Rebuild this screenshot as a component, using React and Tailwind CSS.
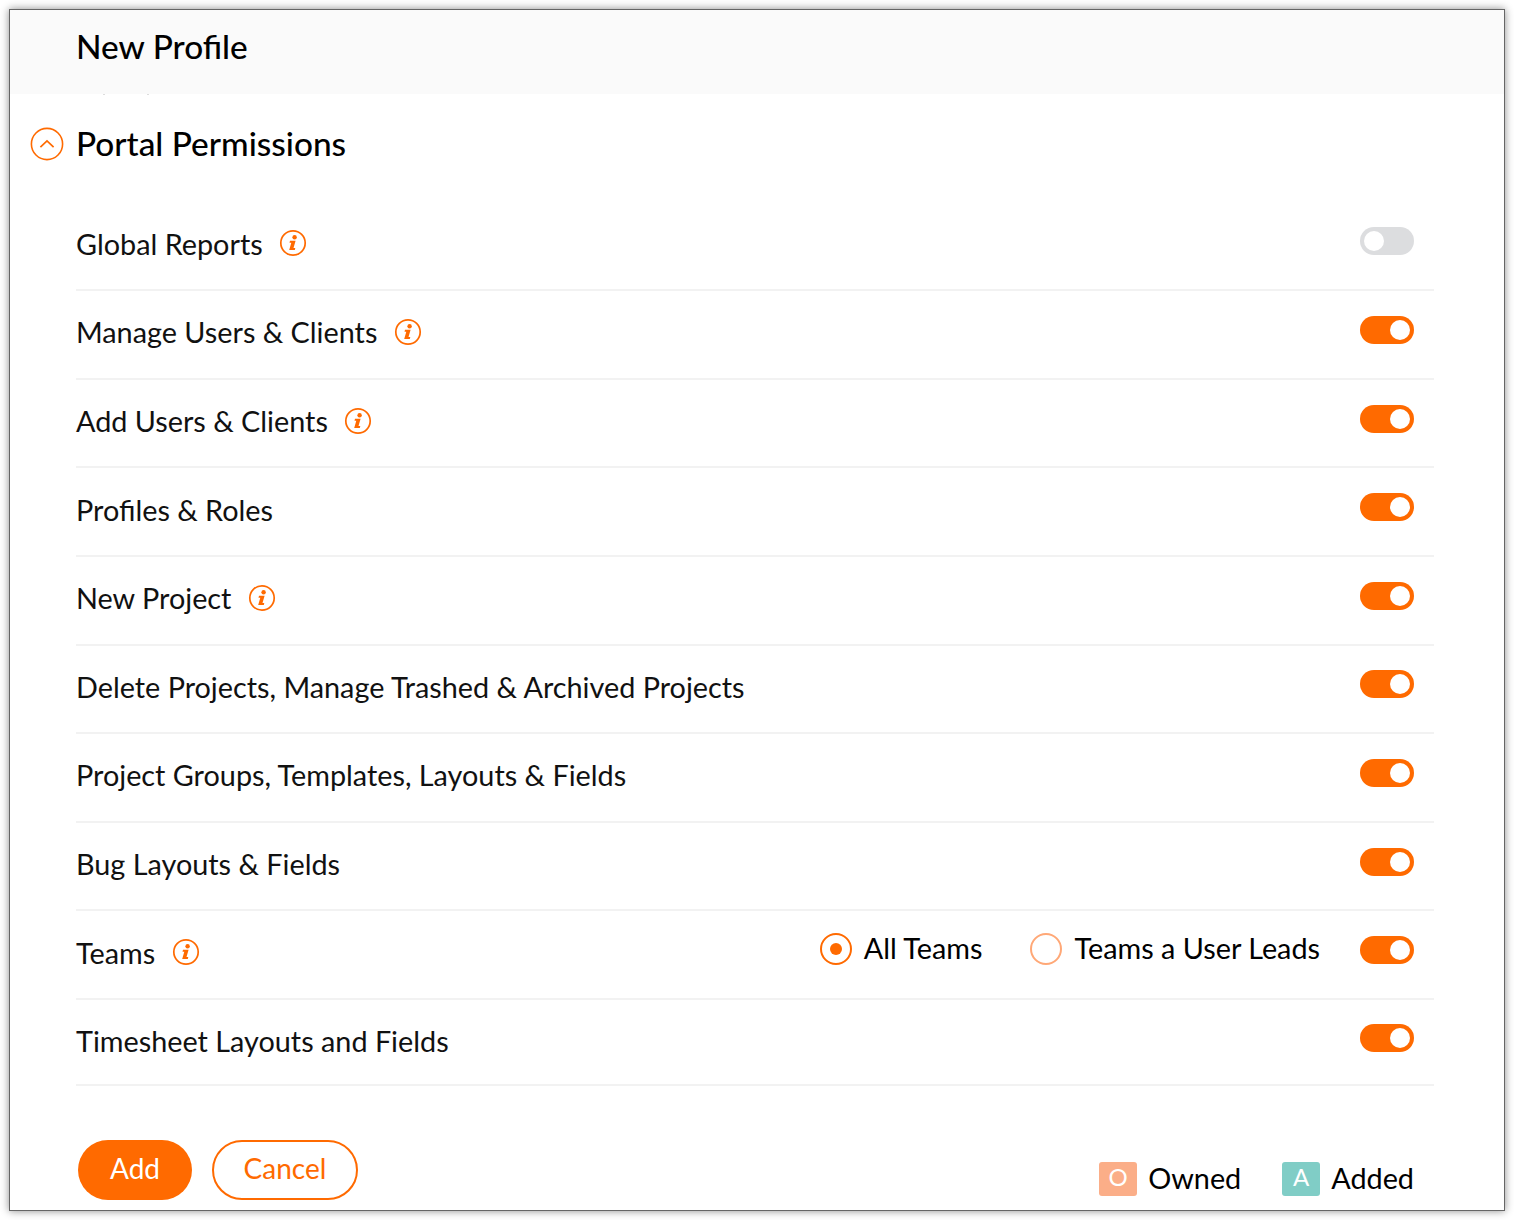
const rows = [
  { label: 'Global Reports', info: true, on: false },
  { label: 'Manage Users & Clients', info: true, on: true },
  { label: 'Add Users & Clients', info: true, on: true },
  { label: 'Profiles & Roles', on: true },
  { label: 'New Project', info: true, on: true },
  { label: 'Delete Projects, Manage Trashed & Archived Projects', on: true },
  { label: 'Project Groups, Templates, Layouts & Fields', on: true },
  { label: 'Bug Layouts & Fields', on: true },
  { label: 'Teams', info: true, on: true, radios: true },
  { label: 'Timesheet Layouts and Fields', on: true, last: true },
];

function InfoIcon() {
  return (
    <svg width="28" height="28" viewBox="0 0 28 28" fill="none" className="ml-[16.5px] mb-[5px]">
      <circle cx="14" cy="14" r="12.2" stroke="#ff6a00" strokeWidth="1.7" />
      <circle cx="15.6" cy="8.2" r="2.2" fill="#ff6a00" />
      <path d="M11 11.8h5.6l-2.1 7.3h1.8l-.5 1.9h-5.6l2.1-7.3h-1.8z" fill="#ff6a00" />
    </svg>
  );
}

function Toggle({ on }) {
  return (
    <div className={`w-[54px] h-[28px] rounded-full flex items-center px-[4px] mb-[9px] ${on ? 'bg-[#ff6a00] justify-end' : 'bg-[#dcdddf] justify-start'}`}>
      <div className="w-[20px] h-[20px] rounded-full bg-white" />
    </div>
  );
}

function Radios() {
  return (
    <div className="flex items-center mr-[40px] mb-[12px] text-[28.8px] text-black">
      <div className="w-[32px] h-[32px] mt-[1px] rounded-full border-2 border-[#ff6a00] flex items-center justify-center">
        <div className="w-[12px] h-[12px] rounded-full bg-[#ff6a00]" />
      </div>
      <span className="ml-[12px]">All Teams</span>
      <div className="w-[32px] h-[32px] mt-[1px] rounded-full border-2 border-[#ffa877] ml-[47px]" />
      <span className="ml-[13px]">Teams a User Leads</span>
    </div>
  );
}

export default function App() {
  return (
    <div className="w-[1514px] h-[1220px] bg-white pt-[9px] pl-[9px] font-['Lato','Carlito',sans-serif]">
      <div className="w-[1496px] h-[1202px] border border-[#666] bg-white shadow-[0_0_8px_rgba(0,0,0,0.45)] overflow-hidden">
        <div className="h-[84px] bg-[#fafafa] pl-[66px] flex items-center text-[33.4px] font-medium text-black pb-[12px]">
          New Profile
        </div>
        {/* clipped text under the header */}
        <div className="h-[1px] flex pl-[93px] gap-[42px]">
          <div className="w-[2px] h-[1px] bg-[#ddd]" />
          <div className="w-[2px] h-[1px] bg-[#ddd]" />
        </div>

        <div className="flex items-center h-[98px] pl-[20px]">
          <svg width="34" height="34" viewBox="0 0 34 34" fill="none">
            <circle cx="17" cy="17" r="15.6" stroke="#ff6a00" strokeWidth="1.6" />
            <path d="M10.4 20.2 17 14l6.6 6.2" stroke="#ff6a00" strokeWidth="1.7" />
          </svg>
          <h2 className="ml-[12px] mb-[2px] text-[33.4px] font-medium text-black">Portal Permissions</h2>
        </div>

        <div className="ml-[66px] w-[1358px] mt-[9.6px]">
          {rows.map((row) => (
            <div
              key={row.label}
              className={`flex items-center border-b-2 border-[#f2f2f2] pr-[20px] ${row.last ? 'h-[86.4px]' : 'h-[88.6px]'}`}
            >
              <span className={`text-[28.8px] text-[#111] mb-[3px] ${row.last ? 'mt-[1px]' : ''}`}>{row.label}</span>
              {row.info && <InfoIcon />}
              <div className="flex-1" />
              {row.radios && <Radios />}
              <Toggle on={row.on} />
            </div>
          ))}
        </div>

        <div className="flex items-start justify-between ml-[68px] mr-[90px] mt-[54px]">
          <div className="flex gap-[20px]">
            <button className="w-[114px] h-[60px] pb-[5px] rounded-full bg-[#ff6a00] text-white text-[28px]">Add</button>
            <button className="w-[146px] h-[60px] pb-[5px] rounded-full border-2 border-[#ff6a00] text-[#ff6a00] text-[28px]">Cancel</button>
          </div>
          <div className="flex items-center mt-[17px] text-[28.8px] text-black">
            <div className="w-[38px] h-[34px] rounded-[3px] bg-[#fbae88] text-white text-[24px] flex items-center justify-center pb-[3px]">O</div>
            <span className="ml-[11px]">Owned</span>
            <div className="w-[38px] h-[34px] rounded-[3px] bg-[#80cdc6] text-white text-[24px] flex items-center justify-center pb-[3px] ml-[41px]">A</div>
            <span className="ml-[11px]">Added</span>
          </div>
        </div>
      </div>
    </div>
  );
}
